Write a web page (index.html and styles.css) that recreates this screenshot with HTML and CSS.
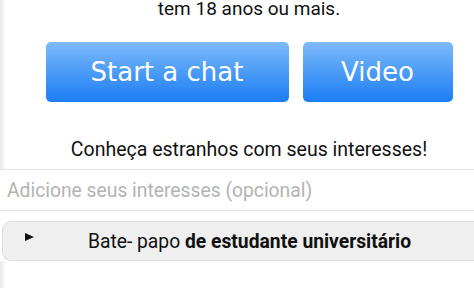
FILE: index.html
```html
<!DOCTYPE html>
<html lang="pt">
<head>
<meta charset="utf-8">
<link rel="stylesheet" href="styles.css">
</head>
<body>
<div class="page">
  <section class="intro">
    <p class="age">tem 18 anos ou mais.</p>
    <div class="buttons">
      <button class="btn btn-chat">Start a chat</button>
      <button class="btn btn-video">Video</button>
    </div>
    <p class="meet">Conheça estranhos com seus interesses!</p>
  </section>
  <div class="interests">
    <input class="interest-input" type="text" placeholder="Adicione seus interesses (opcional)">
  </div>
  <div class="college">
    <span class="arrow"></span>
    <span class="college-text">Bate- papo <b>de estudante universitário</b></span>
  </div>
  <div class="bottom"></div>
</div>
</body>
</html>
```

FILE: styles.css
```css
html, body {
  margin: 0;
  padding: 0;
  background: #fff;
}
body {
  font-family: Roboto, "Liberation Sans", sans-serif;
  color: #111;
  overflow: hidden;
}
.page {
  width: 474px;
  height: 288px;
  overflow: hidden;
}
.intro {
  display: flow-root;
  background: linear-gradient(to right, #e9e9e9 0, #f3f3f3 3px, #fbfbfb 5px, #fff 7px);
  padding-left: 24px;
  height: 169px;
  box-sizing: border-box;
}
.age {
  margin: -3px 0 0 0;
  text-align: center;
  font-size: 19px;
  line-height: 23px;
}
.buttons {
  display: flex;
  justify-content: center;
  gap: 14px;
  margin-top: 22px;
}
.btn {
  height: 60px;
  border: none;
  border-radius: 5px;
  background: linear-gradient(to bottom, #7fbafa 0%, #4b9bf7 50%, #1c7df4 100%);
  color: #fff;
  font-family: "DejaVu Sans", sans-serif;
  font-size: 26px;
  padding: 0;
}
.btn-chat { width: 243px; }
.btn-video { width: 150px; }
.meet {
  margin: 36px 0 0 0;
  text-align: center;
  font-size: 19.5px;
  line-height: 24px;
}
.interests {
  border-top: 1px solid #e4e4e4;
  border-bottom: 1px solid #e4e4e4;
  height: 40px;
  display: flex;
}
.interest-input {
  flex: 1;
  border: none;
  outline: none;
  background: #fff;
  font-family: Roboto, "Liberation Sans", sans-serif;
  font-size: 19.3px;
  padding: 0 0 0 7px;
  color: #333;
}
.interest-input::placeholder {
  color: #b3b3b3;
}
.college {
  margin: 10px -10px 0 2px;
  height: 38px;
  background: #efefef;
  border: 1px solid #dcdcdc;
  border-right: none;
  border-radius: 9px 0 0 9px;
  display: flex;
  align-items: center;
  position: relative;
}
.arrow {
  position: absolute;
  left: 22px;
  top: 11px;
  width: 0;
  height: 0;
  border-top: 4.5px solid transparent;
  border-bottom: 4.5px solid transparent;
  border-left: 9px solid #111;
}
.college-text {
  flex: 1;
  text-align: center;
  padding-left: 12px;
  font-size: 19.3px;
}
.college-text b {
  font-weight: 700;
}
.bottom {
  height: 30px;
  background: linear-gradient(to right, #e9e9e9 0, #f3f3f3 3px, #fbfbfb 5px, #fff 7px);
}
```
